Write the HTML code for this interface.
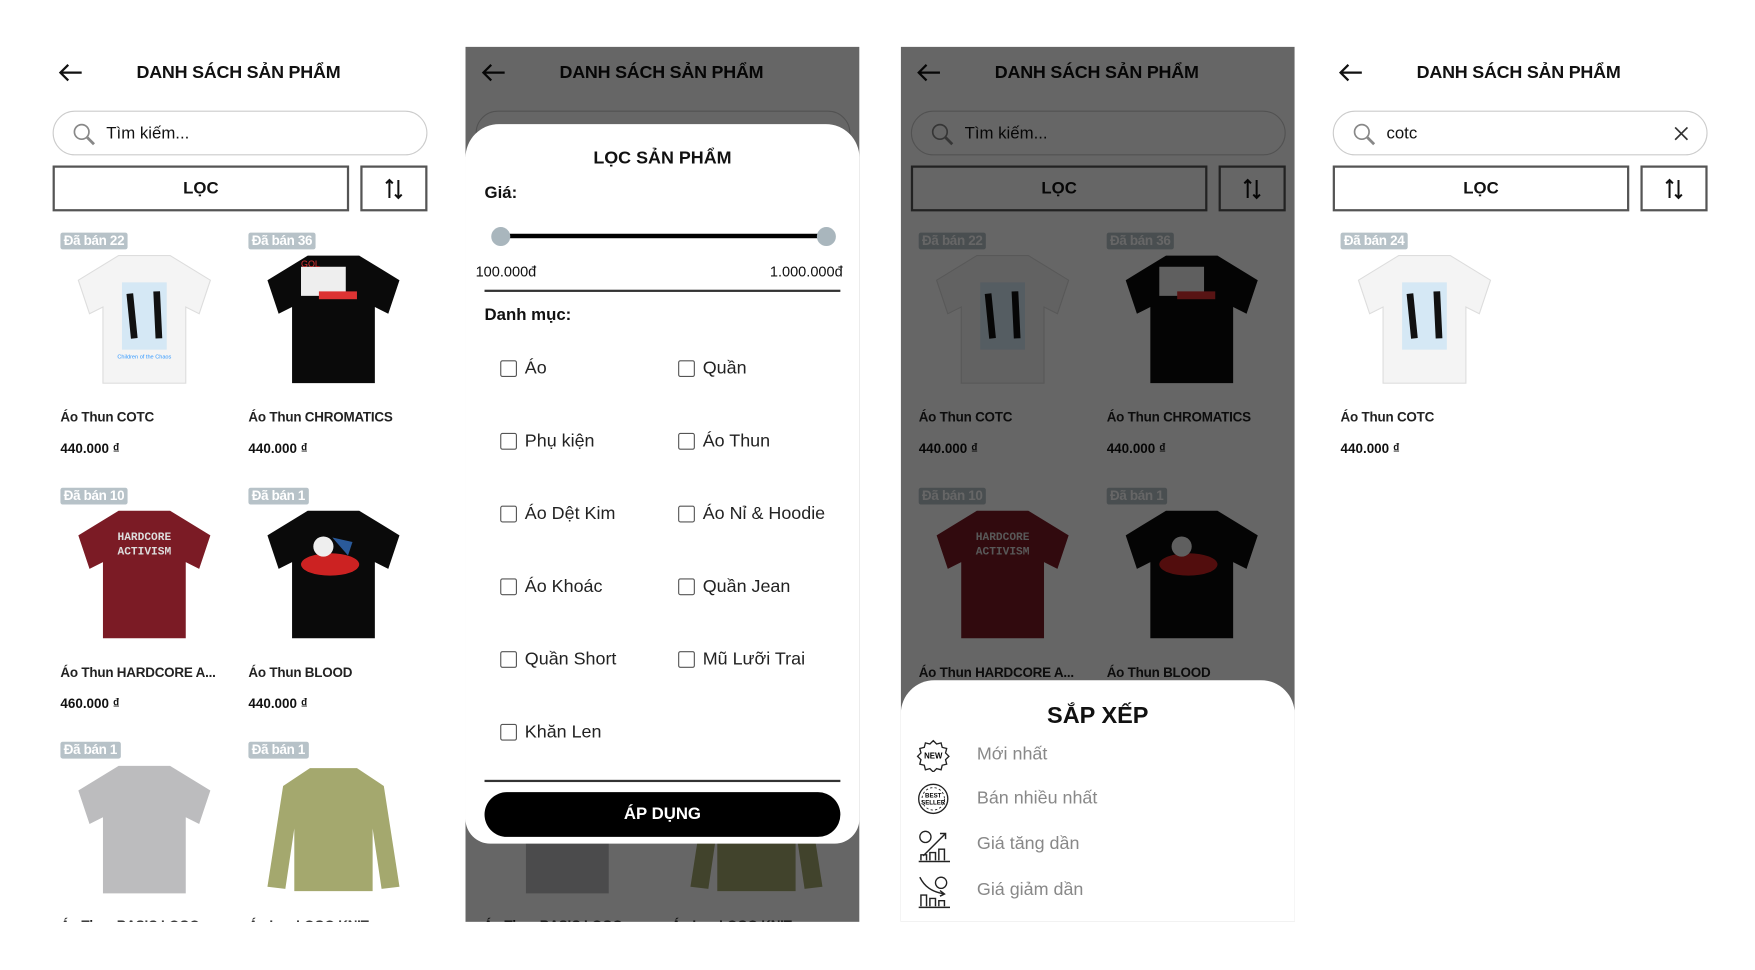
<!DOCTYPE html>
<html><head><meta charset="utf-8">
<style>
*{margin:0;padding:0;box-sizing:border-box}
body{width:1755px;height:970px;background:#fff;overflow:hidden;font-family:"Liberation Sans",sans-serif;color:#111}
#w{position:absolute;left:0;top:1px;width:1570px;height:866px;transform:scale(1.119);transform-origin:0 0}
.p{position:absolute;top:0;height:823px;width:352px;overflow:hidden;background:#fff}
.a{position:absolute}
.arrow{left:14px;top:56px}
.ttl{left:84px;top:55px;font-weight:bold;font-size:16px;line-height:20px;white-space:nowrap;letter-spacing:-0.2px}
.srch{left:9px;top:98px;width:335px;height:40px;border:1.5px solid #ccc;border-radius:20px}
.srch span{position:absolute;left:47px;top:11px;font-size:15px;line-height:18px}
.srch svg{position:absolute;left:16px;top:9px}
.loc{left:9px;top:147px;width:265px;height:41px;border:2px solid #555;text-align:center;font-weight:bold;font-size:15px;line-height:38px}
.srt{left:284px;top:147px;width:60px;height:41px;border:2px solid #555}
.srt svg{position:absolute;left:20px;top:9px}
.bd{background:#b7c2c8;color:#fff;font-size:12px;font-weight:bold;line-height:15px;padding:0 3px;border-radius:2px;letter-spacing:-0.3px}
.nm{font-size:12px;font-weight:bold;line-height:16px;white-space:nowrap;color:#222;letter-spacing:-0.2px}
.pr{font-size:12px;font-weight:bold;line-height:15px}
.ov{position:absolute;left:0;top:41px;width:352px;height:782px;background:rgba(0,0,0,.6)}
.cb{position:absolute;width:15px;height:15px;border:1.5px solid #555;border-radius:2px}
.cl{position:absolute;font-size:16px;line-height:20px;color:#222;white-space:nowrap}
.si{position:absolute;left:68px;font-size:16px;line-height:20px;color:#888}
</style></head><body><div id="w">

<!-- PANEL 1 -->
<div class="p" style="left:38px">
<svg class="a arrow" width="22" height="16" viewBox="0 0 22 16"><path d="M21 8H2M9 1L2 8l7 7" fill="none" stroke="#111" stroke-width="2"/></svg>
<div class="a ttl">DANH SÁCH SẢN PHẨM</div>
<div class="a srch"><svg width="22" height="22" viewBox="0 0 22 22"><circle cx="9" cy="9" r="6.5" fill="none" stroke="#888" stroke-width="1.5"/><path d="M14 14l6 6" stroke="#888" stroke-width="2.5"/></svg><span>Tìm kiếm...</span></div>
<div class="a loc">LỌC</div>
<div class="a srt"><svg width="16" height="20" viewBox="0 0 16 20"><path d="M4 18V2M1 5l3-3 3 3M12 2v16M9 15l3 3 3-3" fill="none" stroke="#111" stroke-width="1.8"/></svg></div>

<div class="a bd" style="left:16px;top:207px">Đã bán 22</div>
<svg class="a" style="left:26px;top:222px" width="130" height="123" viewBox="0 0 130 120"><path d="M42 4L88 4L124 26L114 56L102 50L102 118L28 118L28 50L16 56L6 26Z" fill="#f4f4f4" stroke="#ddd"/><path d="M45 28h40v60H45z" fill="#bfe0f5" opacity=".6"/><path d="M52 38l4 40M76 36l2 42" stroke="#111" stroke-width="6"/><text x="65" y="96" font-size="5" fill="#39f" text-anchor="middle">Children of the Chaos</text></svg>
<div class="a bd" style="left:184px;top:207px">Đã bán 36</div>
<svg class="a" style="left:195px;top:222px" width="130" height="123" viewBox="0 0 130 120"><path d="M42 4L88 4L124 26L114 56L102 50L102 118L28 118L28 50L16 56L6 26Z" fill="#0a0a0a"/><rect x="36" y="14" width="40" height="26" fill="#eee"/><rect x="52" y="36" width="34" height="7" fill="#d33"/><text x="36" y="14" font-size="8" fill="#d33">GOL</text></svg>
<div class="a nm" style="left:16px;top:364px">Áo Thun COTC</div>
<div class="a pr" style="left:16px;top:393px">440.000 ₫</div>
<div class="a nm" style="left:184px;top:364px">Áo Thun CHROMATICS</div>
<div class="a pr" style="left:184px;top:393px">440.000 ₫</div>

<div class="a bd" style="left:16px;top:435px">Đã bán 10</div>
<svg class="a" style="left:26px;top:450px" width="130" height="123" viewBox="0 0 130 120"><path d="M42 4L88 4L124 26L114 56L102 50L102 118L28 118L28 50L16 56L6 26Z" fill="#7b1b25"/><text x="65" y="30" font-size="10" font-weight="bold" fill="#ddd" text-anchor="middle" font-family="Liberation Mono">HARDCORE</text><text x="65" y="43" font-size="10" font-weight="bold" fill="#ddd" text-anchor="middle" font-family="Liberation Mono">ACTIVISM</text></svg>
<div class="a bd" style="left:184px;top:435px">Đã bán 1</div>
<svg class="a" style="left:195px;top:450px" width="130" height="123" viewBox="0 0 130 120"><path d="M42 4L88 4L124 26L114 56L102 50L102 118L28 118L28 50L16 56L6 26Z" fill="#0a0a0a"/><ellipse cx="62" cy="52" rx="26" ry="10" fill="#c22"/><circle cx="56" cy="36" r="9" fill="#eee"/><path d="M64 28l18 4-4 12z" fill="#2a5a9a"/></svg>
<div class="a nm" style="left:16px;top:592px">Áo Thun HARDCORE A...</div>
<div class="a pr" style="left:16px;top:621px">460.000 ₫</div>
<div class="a nm" style="left:184px;top:592px">Áo Thun BLOOD</div>
<div class="a pr" style="left:184px;top:621px">440.000 ₫</div>

<div class="a bd" style="left:16px;top:662px">Đã bán 1</div>
<svg class="a" style="left:26px;top:678px" width="130" height="123" viewBox="0 0 130 120"><path d="M42 4L88 4L124 26L114 56L102 50L102 118L28 118L28 50L16 56L6 26Z" fill="#bcbcbe"/></svg>
<div class="a bd" style="left:184px;top:662px">Đã bán 1</div>
<svg class="a" style="left:195px;top:678px" width="130" height="123" viewBox="0 0 130 120"><path d="M44 6L86 6L110 22L124 112L108 114L100 60L100 116L30 116L30 60L22 114L6 112L20 22Z" fill="#a4a86e"/></svg>
<div class="a nm" style="left:16px;top:818px">Áo Thun BASIC LOGO</div>
<div class="a nm" style="left:184px;top:818px">Áo Len LOGO KNIT</div>
</div>

<!-- PANEL 2 -->
<div class="p" style="left:416px">
<svg class="a arrow" width="22" height="16" viewBox="0 0 22 16"><path d="M21 8H2M9 1L2 8l7 7" fill="none" stroke="#111" stroke-width="2"/></svg>
<div class="a ttl">DANH SÁCH SẢN PHẨM</div>
<div class="a srch"></div>
<svg class="a" style="left:26px;top:678px" width="130" height="123" viewBox="0 0 130 120"><path d="M42 4L88 4L124 26L114 56L102 50L102 118L28 118L28 50L16 56L6 26Z" fill="#bcbcbe"/></svg>
<svg class="a" style="left:195px;top:678px" width="130" height="123" viewBox="0 0 130 120"><path d="M44 6L86 6L110 22L124 112L108 114L100 60L100 116L30 116L30 60L22 114L6 112L20 22Z" fill="#a4a86e"/></svg>
<div class="a nm" style="left:16px;top:818px">Áo Thun BASIC LOGO</div>
<div class="a nm" style="left:184px;top:818px">Áo Len LOGO KNIT</div>
<div class="ov"></div>
<div class="a" style="left:0;top:110px;width:352px;height:643px;background:#fff;border-radius:30px 30px 22px 22px"></div>
<div class="a" style="left:0;top:131px;width:352px;text-align:center;font-weight:bold;font-size:16px;line-height:20px">LỌC SẢN PHẨM</div>
<div class="a" style="left:17px;top:163px;font-weight:bold;font-size:15px;line-height:18px">Giá:</div>
<div class="a" style="left:31px;top:208px;width:291px;height:4px;background:#000"></div>
<div class="a" style="left:23px;top:202px;width:17px;height:17px;border-radius:50%;background:#a9b6bd"></div>
<div class="a" style="left:314px;top:202px;width:17px;height:17px;border-radius:50%;background:#a9b6bd"></div>
<div class="a" style="left:9px;top:234px;font-size:13px;line-height:16px">100.000đ</div>
<div class="a" style="left:272px;top:234px;font-size:13px;line-height:16px">1.000.000đ</div>
<div class="a" style="left:17px;top:258px;width:318px;height:1.5px;background:#333"></div>
<div class="a" style="left:17px;top:272px;font-weight:bold;font-size:15px;line-height:18px">Danh mục:</div>
<div class="cb" style="left:31px;top:321px"></div><div class="cl" style="left:53px;top:319px">Áo</div>
<div class="cb" style="left:190px;top:321px"></div><div class="cl" style="left:212px;top:319px">Quần</div>
<div class="cb" style="left:31px;top:386px"></div><div class="cl" style="left:53px;top:384px">Phụ kiện</div>
<div class="cb" style="left:190px;top:386px"></div><div class="cl" style="left:212px;top:384px">Áo Thun</div>
<div class="cb" style="left:31px;top:451px"></div><div class="cl" style="left:53px;top:449px">Áo Dệt Kim</div>
<div class="cb" style="left:190px;top:451px"></div><div class="cl" style="left:212px;top:449px">Áo Nỉ &amp; Hoodie</div>
<div class="cb" style="left:31px;top:516px"></div><div class="cl" style="left:53px;top:514px">Áo Khoác</div>
<div class="cb" style="left:190px;top:516px"></div><div class="cl" style="left:212px;top:514px">Quần Jean</div>
<div class="cb" style="left:31px;top:581px"></div><div class="cl" style="left:53px;top:579px">Quần Short</div>
<div class="cb" style="left:190px;top:581px"></div><div class="cl" style="left:212px;top:579px">Mũ Lưỡi Trai</div>
<div class="cb" style="left:31px;top:646px"></div><div class="cl" style="left:53px;top:644px">Khăn Len</div>
<div class="a" style="left:17px;top:696px;width:318px;height:1.5px;background:#333"></div>
<div class="a" style="left:17px;top:707px;width:318px;height:40px;background:#000;border-radius:20px;color:#fff;text-align:center;font-weight:bold;font-size:15px;line-height:40px">ÁP DỤNG</div>
</div>

<!-- PANEL 3 -->
<div class="p" style="left:805px">
<svg class="a arrow" width="22" height="16" viewBox="0 0 22 16"><path d="M21 8H2M9 1L2 8l7 7" fill="none" stroke="#111" stroke-width="2"/></svg>
<div class="a ttl">DANH SÁCH SẢN PHẨM</div>
<div class="a srch"><svg width="22" height="22" viewBox="0 0 22 22"><circle cx="9" cy="9" r="6.5" fill="none" stroke="#888" stroke-width="1.5"/><path d="M14 14l6 6" stroke="#888" stroke-width="2.5"/></svg><span>Tìm kiếm...</span></div>
<div class="a loc">LỌC</div>
<div class="a srt"><svg width="16" height="20" viewBox="0 0 16 20"><path d="M4 18V2M1 5l3-3 3 3M12 2v16M9 15l3 3 3-3" fill="none" stroke="#111" stroke-width="1.8"/></svg></div>
<div class="a bd" style="left:16px;top:207px">Đã bán 22</div>
<svg class="a" style="left:26px;top:222px" width="130" height="123" viewBox="0 0 130 120"><path d="M42 4L88 4L124 26L114 56L102 50L102 118L28 118L28 50L16 56L6 26Z" fill="#f4f4f4" stroke="#ddd"/><path d="M45 28h40v60H45z" fill="#bfe0f5" opacity=".6"/><path d="M52 38l4 40M76 36l2 42" stroke="#111" stroke-width="6"/></svg>
<div class="a bd" style="left:184px;top:207px">Đã bán 36</div>
<svg class="a" style="left:195px;top:222px" width="130" height="123" viewBox="0 0 130 120"><path d="M42 4L88 4L124 26L114 56L102 50L102 118L28 118L28 50L16 56L6 26Z" fill="#0a0a0a"/><rect x="36" y="14" width="40" height="26" fill="#eee"/><rect x="52" y="36" width="34" height="7" fill="#d33"/></svg>
<div class="a nm" style="left:16px;top:364px">Áo Thun COTC</div>
<div class="a pr" style="left:16px;top:393px">440.000 ₫</div>
<div class="a nm" style="left:184px;top:364px">Áo Thun CHROMATICS</div>
<div class="a pr" style="left:184px;top:393px">440.000 ₫</div>
<div class="a bd" style="left:16px;top:435px">Đã bán 10</div>
<svg class="a" style="left:26px;top:450px" width="130" height="123" viewBox="0 0 130 120"><path d="M42 4L88 4L124 26L114 56L102 50L102 118L28 118L28 50L16 56L6 26Z" fill="#7b1b25"/><text x="65" y="30" font-size="10" font-weight="bold" fill="#ddd" text-anchor="middle" font-family="Liberation Mono">HARDCORE</text><text x="65" y="43" font-size="10" font-weight="bold" fill="#ddd" text-anchor="middle" font-family="Liberation Mono">ACTIVISM</text></svg>
<div class="a bd" style="left:184px;top:435px">Đã bán 1</div>
<svg class="a" style="left:195px;top:450px" width="130" height="123" viewBox="0 0 130 120"><path d="M42 4L88 4L124 26L114 56L102 50L102 118L28 118L28 50L16 56L6 26Z" fill="#0a0a0a"/><ellipse cx="62" cy="52" rx="26" ry="10" fill="#c22"/><circle cx="56" cy="36" r="9" fill="#eee"/></svg>
<div class="a nm" style="left:16px;top:592px">Áo Thun HARDCORE A...</div>
<div class="a nm" style="left:184px;top:592px">Áo Thun BLOOD</div>
<div class="ov"></div>
<div class="a" style="left:0;top:607px;width:352px;height:230px;background:#fff;border-radius:30px 30px 0 0"></div>
<div class="a" style="left:0;top:626px;width:352px;text-align:center;font-weight:bold;font-size:21px;line-height:25px">SẮP XẾP</div>
<svg class="a" style="left:14px;top:659px" width="30" height="30" viewBox="0 0 30 30"><path d="M15 2l3 3 4-1 1 4 4 1-1 4 3 3-3 3 1 4-4 1-1 4-4-1-3 3-3-3-4 1-1-4-4-1 1-4-3-3 3-3-1-4 4-1 1-4 4 1z" fill="none" stroke="#222" stroke-width="1.2"/><text x="15" y="18" font-size="7" font-weight="bold" text-anchor="middle">NEW</text></svg>
<div class="si" style="top:664px">Mới nhất</div>
<svg class="a" style="left:14px;top:698px" width="30" height="30" viewBox="0 0 30 30"><circle cx="15" cy="15" r="13" fill="none" stroke="#222" stroke-width="1.2"/><circle cx="15" cy="15" r="10" fill="none" stroke="#222" stroke-width=".8" stroke-dasharray="2 2"/><text x="15" y="14" font-size="5.5" font-weight="bold" text-anchor="middle">BEST</text><text x="15" y="20" font-size="5.5" font-weight="bold" text-anchor="middle">SELLER</text></svg>
<div class="si" style="top:703px">Bán nhiều nhất</div>
<svg class="a" style="left:14px;top:740px" width="30" height="30" viewBox="0 0 30 30"><circle cx="8" cy="7" r="5" fill="none" stroke="#222" stroke-width="1.2"/><path d="M6 24L26 4M21 4h5v5M2 29h28M4 28v-5h5v5M12 28v-7h5v7M20 28v-10h5v10" fill="none" stroke="#222" stroke-width="1.3"/></svg>
<div class="si" style="top:744px">Giá tăng dần</div>
<svg class="a" style="left:14px;top:781px" width="30" height="30" viewBox="0 0 30 30"><circle cx="22" cy="7" r="5" fill="none" stroke="#222" stroke-width="1.2"/><path d="M3 2c4 8 10 13 22 15M21 14l4 3-4 2M2 29h28M4 28v-10h5v10M12 28v-7h5v7M20 28v-5h5v5" fill="none" stroke="#222" stroke-width="1.3"/></svg>
<div class="si" style="top:785px">Giá giảm dần</div>
</div>

<!-- PANEL 4 -->
<div class="p" style="left:1182px">
<svg class="a arrow" width="22" height="16" viewBox="0 0 22 16"><path d="M21 8H2M9 1L2 8l7 7" fill="none" stroke="#111" stroke-width="2"/></svg>
<div class="a ttl">DANH SÁCH SẢN PHẨM</div>
<div class="a srch"><svg width="22" height="22" viewBox="0 0 22 22"><circle cx="9" cy="9" r="6.5" fill="none" stroke="#888" stroke-width="1.5"/><path d="M14 14l6 6" stroke="#888" stroke-width="2.5"/></svg><span>cotc</span><svg style="left:304px;top:13px" width="13" height="13" viewBox="0 0 13 13"><path d="M1 1l11 11M12 1L1 12" stroke="#333" stroke-width="1.5"/></svg></div>
<div class="a loc">LỌC</div>
<div class="a srt"><svg width="16" height="20" viewBox="0 0 16 20"><path d="M4 18V2M1 5l3-3 3 3M12 2v16M9 15l3 3 3-3" fill="none" stroke="#111" stroke-width="1.8"/></svg></div>
<div class="a bd" style="left:16px;top:207px">Đã bán 24</div>
<svg class="a" style="left:26px;top:222px" width="130" height="123" viewBox="0 0 130 120"><path d="M42 4L88 4L124 26L114 56L102 50L102 118L28 118L28 50L16 56L6 26Z" fill="#f4f4f4" stroke="#ddd"/><path d="M45 28h40v60H45z" fill="#bfe0f5" opacity=".6"/><path d="M52 38l4 40M76 36l2 42" stroke="#111" stroke-width="6"/></svg>
<div class="a nm" style="left:16px;top:364px">Áo Thun COTC</div>
<div class="a pr" style="left:16px;top:393px">440.000 ₫</div>
</div>

</div></body></html>
